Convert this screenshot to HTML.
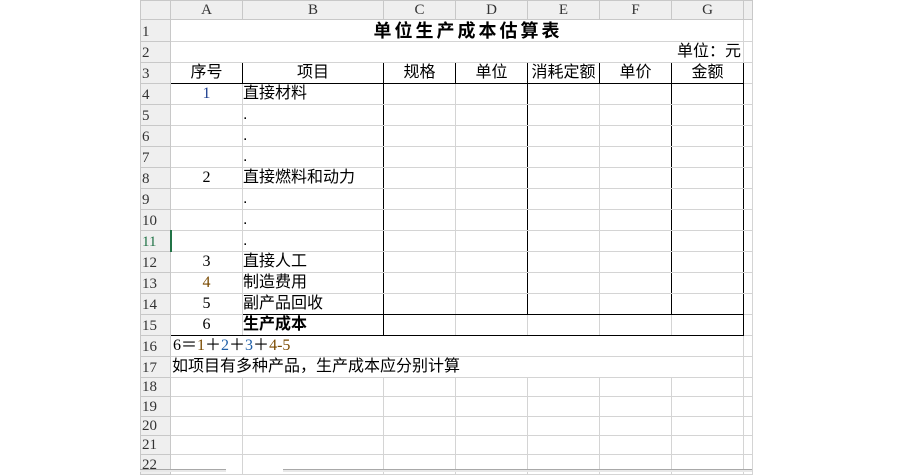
<!DOCTYPE html>
<html><head><meta charset="utf-8"><style>
*{margin:0;padding:0;box-sizing:border-box}
body{width:900px;height:472px;background:#fff;overflow:hidden;position:relative;font-family:"Liberation Sans","Noto Sans CJK SC",sans-serif}
table{position:absolute;left:140px;top:0;border-collapse:collapse;table-layout:fixed}
td{border:1px solid #d4d4d4;padding:0;font-size:16px;color:#000;white-space:nowrap;overflow:visible;line-height:1}
td.h{background:#efefef;color:#333;font-family:"Liberation Serif",serif;font-size:15px;text-align:center;border-color:#c8c8c8}
td.rh{background:#efefef;color:#333;font-family:"Liberation Serif",serif;font-size:15px;text-align:left;padding-left:1px;border-color:#c8c8c8;vertical-align:bottom;padding-bottom:1px}
.c{text-align:center}
.n{font-family:"Liberation Serif",serif;text-align:center;font-size:16px}
.t{border:1px solid #000}
</style></head><body>
<table>
<colgroup><col style="width:30px"><col style="width:72px"><col style="width:141px"><col style="width:72px"><col style="width:72px"><col style="width:72px"><col style="width:72px"><col style="width:72px"><col style="width:9px"></colgroup>
<tr style="height:19px"><td class="h"></td><td class="h">A</td><td class="h">B</td><td class="h">C</td><td class="h">D</td><td class="h">E</td><td class="h">F</td><td class="h">G</td><td class="h"></td></tr>
<tr style="height:22px"><td class="rh">1</td><td colspan="7" style="text-align:center;font-weight:bold;font-size:18px;letter-spacing:3px;padding-left:22px">单位生产成本估算表</td><td></td></tr>
<tr style="height:21px"><td class="rh">2</td><td colspan="7" style="text-align:right;padding-right:2px">单位：元</td><td></td></tr>
<tr style="height:21px"><td class="rh">3</td><td class="c t">序号</td><td class="c t">项目</td><td class="c t">规格</td><td class="c t">单位</td><td class="c t">消耗定额</td><td class="c t">单价</td><td class="c t">金额</td><td></td></tr>
<tr style="height:21px"><td class="rh">4</td><td class="n" style="color:#1f3f8f">1</td><td style="border-left:1px solid #000;border-right:1px solid #000">直接材料</td><td></td><td style="border-left:1px solid #000;border-right:1px solid #000"></td><td></td><td style="border-left:1px solid #000;border-right:1px solid #000"></td><td style="border-right:1px solid #000"></td><td></td></tr>
<tr style="height:21px"><td class="rh">5</td><td></td><td style="border-left:1px solid #000;border-right:1px solid #000">.</td><td></td><td style="border-left:1px solid #000;border-right:1px solid #000"></td><td></td><td style="border-left:1px solid #000;border-right:1px solid #000"></td><td style="border-right:1px solid #000"></td><td></td></tr>
<tr style="height:21px"><td class="rh">6</td><td></td><td style="border-left:1px solid #000;border-right:1px solid #000">.</td><td></td><td style="border-left:1px solid #000;border-right:1px solid #000"></td><td></td><td style="border-left:1px solid #000;border-right:1px solid #000"></td><td style="border-right:1px solid #000"></td><td></td></tr>
<tr style="height:21px"><td class="rh">7</td><td></td><td style="border-left:1px solid #000;border-right:1px solid #000">.</td><td></td><td style="border-left:1px solid #000;border-right:1px solid #000"></td><td></td><td style="border-left:1px solid #000;border-right:1px solid #000"></td><td style="border-right:1px solid #000"></td><td></td></tr>
<tr style="height:21px"><td class="rh">8</td><td class="n">2</td><td style="border-left:1px solid #000;border-right:1px solid #000">直接燃料和动力</td><td></td><td style="border-left:1px solid #000;border-right:1px solid #000"></td><td></td><td style="border-left:1px solid #000;border-right:1px solid #000"></td><td style="border-right:1px solid #000"></td><td></td></tr>
<tr style="height:21px"><td class="rh">9</td><td></td><td style="border-left:1px solid #000;border-right:1px solid #000">.</td><td></td><td style="border-left:1px solid #000;border-right:1px solid #000"></td><td></td><td style="border-left:1px solid #000;border-right:1px solid #000"></td><td style="border-right:1px solid #000"></td><td></td></tr>
<tr style="height:21px"><td class="rh">10</td><td></td><td style="border-left:1px solid #000;border-right:1px solid #000">.</td><td></td><td style="border-left:1px solid #000;border-right:1px solid #000"></td><td></td><td style="border-left:1px solid #000;border-right:1px solid #000"></td><td style="border-right:1px solid #000"></td><td></td></tr>
<tr style="height:21px"><td class="rh" style="color:#217346;border-right:2px solid #217346">11</td><td></td><td style="border-left:1px solid #000;border-right:1px solid #000">.</td><td></td><td style="border-left:1px solid #000;border-right:1px solid #000"></td><td></td><td style="border-left:1px solid #000;border-right:1px solid #000"></td><td style="border-right:1px solid #000"></td><td></td></tr>
<tr style="height:21px"><td class="rh">12</td><td class="n">3</td><td style="border-left:1px solid #000;border-right:1px solid #000">直接人工</td><td></td><td style="border-left:1px solid #000;border-right:1px solid #000"></td><td></td><td style="border-left:1px solid #000;border-right:1px solid #000"></td><td style="border-right:1px solid #000"></td><td></td></tr>
<tr style="height:21px"><td class="rh">13</td><td class="n" style="color:#7a4a00">4</td><td style="border-left:1px solid #000;border-right:1px solid #000">制造费用</td><td></td><td style="border-left:1px solid #000;border-right:1px solid #000"></td><td></td><td style="border-left:1px solid #000;border-right:1px solid #000"></td><td style="border-right:1px solid #000"></td><td></td></tr>
<tr style="height:21px"><td class="rh">14</td><td class="n">5</td><td style="border-left:1px solid #000;border-right:1px solid #000;border-bottom:1px solid #000">副产品回收</td><td style="border-bottom:1px solid #000"></td><td style="border-left:1px solid #000;border-right:1px solid #000;border-bottom:1px solid #000"></td><td style="border-bottom:1px solid #000"></td><td style="border-left:1px solid #000;border-right:1px solid #000;border-bottom:1px solid #000"></td><td style="border-right:1px solid #000;border-bottom:1px solid #000"></td><td></td></tr>
<tr style="height:21px"><td class="rh">15</td><td class="n" style="border-bottom:1px solid #000">6</td><td style="border-left:1px solid #000;border-right:1px solid #000;border-bottom:1px solid #000;font-weight:bold">生产成本</td><td style="border-bottom:1px solid #000"></td><td style="border-bottom:1px solid #000"></td><td style="border-bottom:1px solid #000"></td><td style="border-bottom:1px solid #000"></td><td style="border-right:1px solid #000;border-bottom:1px solid #000"></td><td></td></tr>
<tr style="height:21px"><td class="rh">16</td><td colspan="7" style="font-family:'Liberation Serif','Noto Sans CJK SC',serif;padding-left:2px">6＝<span style="color:#7a4a00">1</span>＋<span style="color:#1f5fa8">2</span>＋<span style="color:#1f5fa8">3</span>＋<span style="color:#7a4a00">4-5</span></td><td></td></tr>
<tr style="height:21px"><td class="rh">17</td><td colspan="7" style="padding-left:1px">如项目有多种产品，生产成本应分别计算</td><td></td></tr>
<tr style="height:19px"><td class="rh">18</td><td></td><td></td><td></td><td></td><td></td><td></td><td></td><td></td></tr>
<tr style="height:20px"><td class="rh">19</td><td></td><td></td><td></td><td></td><td></td><td></td><td></td><td></td></tr>
<tr style="height:19px"><td class="rh">20</td><td></td><td></td><td></td><td></td><td></td><td></td><td></td><td></td></tr>
<tr style="height:19px"><td class="rh">21</td><td></td><td></td><td></td><td></td><td></td><td></td><td></td><td></td></tr>
<tr style="height:20px"><td class="rh">22</td><td></td><td></td><td></td><td></td><td></td><td></td><td></td><td></td></tr>
</table>
<div style="position:absolute;left:140px;top:469px;width:86px;height:3px;background:#e8e8e8;border-top:1px solid #a8a8a8"></div>
<div style="position:absolute;left:283px;top:469px;width:469px;height:3px;background:#e8e8e8;border-top:1px solid #a8a8a8"></div>
</body></html>
